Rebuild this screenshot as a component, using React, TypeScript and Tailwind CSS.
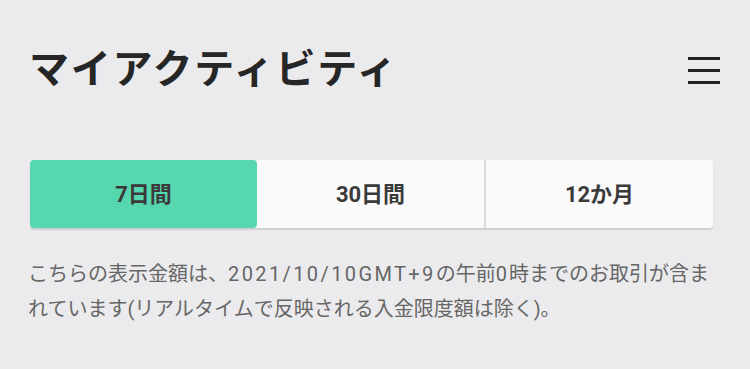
import React from "react";

export default function App() {
  const font = { fontFamily: "Roboto, 'Noto Sans CJK JP', sans-serif" };
  return (
    <div className="w-[750px] h-[369px] bg-[#ebebed] overflow-hidden" style={font}>
      <div className="flex items-center justify-between pl-[29px] pr-[30px] pt-[42px]">
        <h1 className="text-[40px] leading-[56px] font-bold text-[#262626] tracking-[1.8px]">マイアクティビティ</h1>
        <div className="flex flex-col gap-[9px] w-[32px]">
          <div className="h-[3px] bg-[#222]" />
          <div className="h-[3px] bg-[#222]" />
          <div className="h-[3px] bg-[#222]" />
        </div>
      </div>
      <div className="mx-[30px] mt-[62px] w-[683px] h-[68px] flex rounded-[4px] bg-[#fafafa] shadow-[0_2px_1px_rgba(0,0,0,0.12)]">
        <button className="flex-1 rounded-[4px] bg-[#57d7b0] text-[22px] font-bold text-[#3a3a3a] flex items-center justify-center">7日間</button>
        <button className="flex-1 text-[22px] font-bold text-[#3a3a3a] flex items-center justify-center border-r-2 border-[#dcdcdc]">30日間</button>
        <button className="flex-1 text-[22px] font-bold text-[#3a3a3a] flex items-center justify-center">12か月</button>
      </div>
      <p className="mx-[28px] mt-[29px] w-[690px] text-[20px] leading-[35px] text-[#666]">
        こちらの表示金額は、<span className="tracking-[2.4px]">2021/10/10GMT+9</span>の午前<span className="tracking-[2px]">0</span>時までのお取引が含まれています(リアルタイムで反映される入金限度額は除く)。
      </p>
    </div>
  );
}
